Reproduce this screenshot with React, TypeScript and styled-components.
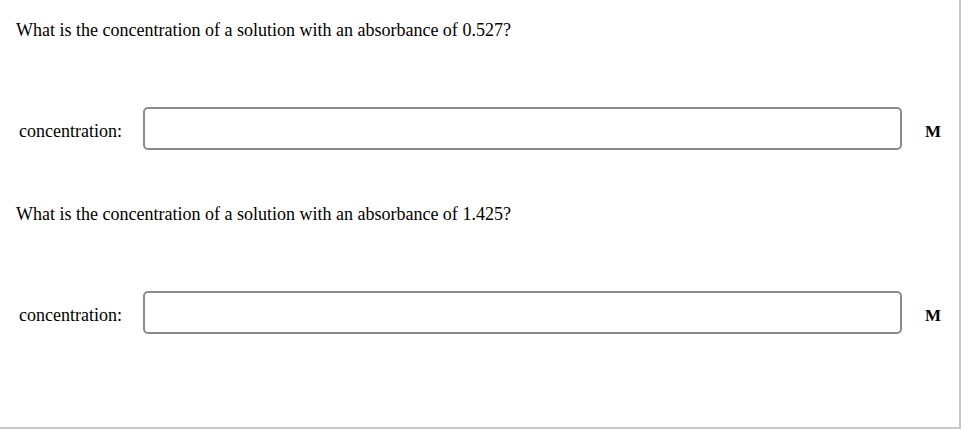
import * as React from 'react';
import styled, { createGlobalStyle } from 'styled-components';

const GlobalStyle = createGlobalStyle`
    html, body {
        margin: 0;
        padding: 0;
        background: #fff;
    }
    body {
        font-family: "Liberation Serif", "Times New Roman", serif;
        color: #000;
    }
`;

const Page = styled.div`
    box-sizing: border-box;
    width: 961px;
    height: 429px;
    border-right: 2px solid #c8c8c8;
    border-bottom: 2px solid #c8c8c8;
    padding: 20px 0 0 16px;
    display: flex;
    flex-direction: column;
`;

const Question = styled.div`
    display: flex;
    flex-direction: column;
    height: 184px;
`;

const Prompt = styled.p`
    margin: 0;
    font-size: 18px;
    line-height: 20px;
`;

const AnswerRow = styled.div`
    display: flex;
    align-items: center;
    margin-top: 67px;
`;

const Label = styled.label`
    box-sizing: border-box;
    flex: 0 0 127px;
    padding: 6px 0 0 3px;
    font-size: 18px;
`;

const Field = styled.input`
    box-sizing: border-box;
    width: 759px;
    height: 43px;
    border: 2px solid #8a8a8a;
    border-radius: 5px;
    background: #fff;
    outline: none;
    font: inherit;
    padding: 0 8px;
`;

const Unit = styled.span`
    margin-left: 23px;
    padding-top: 6px;
    font-size: 17px;
    font-weight: bold;
`;

const questions = ['0.527', '1.425'];

export default function App() {
    return (
        <>
            <GlobalStyle />
            <Page>
                {questions.map(abs => (
                    <Question key={abs}>
                        <Prompt>What is the concentration of a solution with an absorbance of {abs}?</Prompt>
                        <AnswerRow>
                            <Label>concentration:</Label>
                            <Field type="text" />
                            <Unit>M</Unit>
                        </AnswerRow>
                    </Question>
                ))}
            </Page>
        </>
    );
}
